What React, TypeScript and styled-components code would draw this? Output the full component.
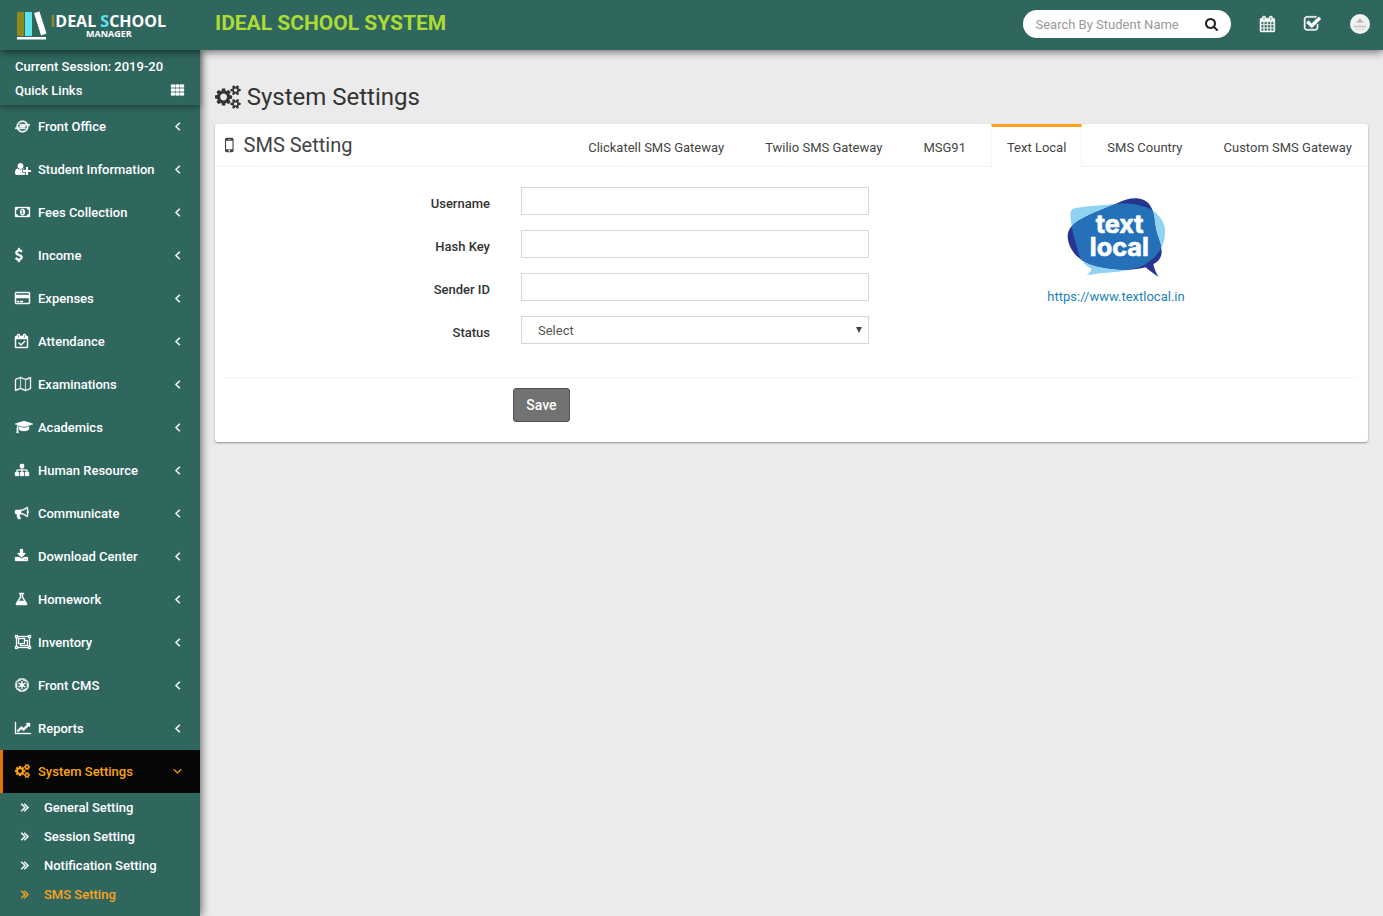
import React from "react";
import styled, { createGlobalStyle, css } from "styled-components";
import { FaEmpire, FaIoxhost } from "react-icons/fa";

const GlobalStyle = createGlobalStyle`
  *, *::before, *::after { box-sizing: border-box; }
  body {
    margin: 0;
    background: #ebebeb;
    color: #333;
    font-family: Roboto, "Liberation Sans", sans-serif;
    font-size: 14px;
    line-height: 20px;
  }
  a { text-decoration: none; color: inherit; }
  ul { list-style: none; margin: 0; padding: 0; }
  h1, h2 { margin: 0; font-weight: 400; }
  input, select, button { font-family: inherit; }
`;

/* ---------- icons ---------- */

type Glyph = { w: number; x?: number; d: string; evenOdd?: boolean };

const glyphs = {
  angleLeft: { w: 640, x: 576, d: "M1203 544q0 13-10 23l-393 393 393 393q10 10 10 23t-10 23l-50 50q-10 10-23 10t-23-10l-466-466q-10-10-10-23t10-23l466-466q10-10 23-10t23 10l50 50q10 10 10 23z" },
  angleDown: { w: 1152, x: 320, d: "M1395 736q0 13-10 23l-466 466q-10 10-23 10t-23-10l-466-466q-10-10-10-23t10-23l50-50q10-10 23-10t23 10l393 393 393-393q10-10 23-10t23 10l50 50q10 10 10 23z" },
  doubleRight: { w: 1024, x: 384, d: "M979 960q0 13-10 23l-466 466q-10 10-23 10t-23-10l-50-50q-10-10-10-23t10-23l393-393-393-393q-10-10-10-23t10-23l50-50q10-10 23-10t23 10l466 466q10 10 10 23zm384 0q0 13-10 23l-466 466q-10 10-23 10t-23-10l-50-50q-10-10-10-23t10-23l393-393-393-393q-10-10-10-23t10-23l50-50q10-10 23-10t23 10l466 466q10 10 10 23z" },
  checkSquare: { w: 1664, x: 64, d: "M1472 930v318q0 119-84.5 203.5t-203.5 84.5h-832q-119 0-203.5-84.5t-84.5-203.5v-832q0-119 84.5-203.5t203.5-84.5h832q63 0 117 25 15 7 18 23 3 17-9 29l-49 49q-10 10-23 10-3 0-9-2-23-6-45-6h-832q-66 0-113 47t-47 113v832q0 66 47 113t113 47h832q66 0 113-47t47-113v-254q0-13 9-22l64-64q10-10 23-10 6 0 12 3 20 8 20 29zm231-489l-814 814q-24 24-57 24t-57-24l-430-430q-24-24-24-57t24-57l110-110q24-24 57-24t57 24l263 263 647-647q24-24 57-24t57 24l110 110q24 24 24 57t-24 57z" },
  calendar: { w: 1664, x: 64, d: "M192 1664h288v-288h-288v288zm352 0h320v-288h-320v288zm-352-352h288v-320h-288v320zm352 0h320v-320h-320v320zm-352-384h288v-288h-288v288zm736 736h320v-288h-320v288zm-384-736h320v-288h-320v288zm768 736h288v-288h-288v288zm-384-352h320v-320h-320v320zm-352-864v-288q0-13-9.5-22.5t-22.5-9.5h-64q-13 0-22.5 9.5t-9.5 22.5v288q0 13 9.5 22.5t22.5 9.5h64q13 0 22.5-9.5t9.5-22.5zm736 864h288v-320h-288v320zm-384-384h320v-288h-320v288zm384 0h288v-288h-288v288zm32-480v-288q0-13-9.5-22.5t-22.5-9.5h-64q-13 0-22.5 9.5t-9.5 22.5v288q0 13 9.5 22.5t22.5 9.5h64q13 0 22.5-9.5t9.5-22.5zm384-64v1280q0 52-38 90t-90 38h-1408q-52 0-90-38t-38-90v-1280q0-52 38-90t90-38h128v-96q0-66 47-113t113-47h64q66 0 113 47t47 113v96h384v-96q0-66 47-113t113-47h64q66 0 113 47t47 113v96h128q52 0 90 38t38 90z" },
  search: { w: 1664, x: 64, d: "M1216 832q0-185-131.5-316.5t-316.5-131.5-316.5 131.5-131.5 316.5 131.5 316.5 316.5 131.5 316.5-131.5 131.5-316.5zm512 832q0 52-38 90t-90 38q-54 0-90-38l-343-342q-179 124-399 124-143 0-273.5-55.5t-225-150-150-225-55.5-273.5 55.5-273.5 150-225 225-150 273.5-55.5 273.5 55.5 225 150 150 225 55.5 273.5q0 220-124 399l343 343q37 37 37 90z" },
  download: { w: 1664, x: 64, d: "M1344 1344q0-26-19-45t-45-19-45 19-19 45 19 45 45 19 45-19 19-45zm256 0q0-26-19-45t-45-19-45 19-19 45 19 45 45 19 45-19 19-45zm128-224v320q0 40-28 68t-68 28h-1472q-40 0-68-28t-28-68v-320q0-40 28-68t68-28h465l135 136q58 56 136 56t136-56l136-136h464q40 0 68 28t28 68zm-325-569q17 41-14 70l-448 448q-18 19-45 19t-45-19l-448-448q-31-29-14-70 17-39 59-39h256v-448q0-26 19-45t45-19h256q26 0 45 19t19 45v448h256q42 0 59 39z" },
  lineChart: { w: 2048, d: "M2048 1536v128h-2048v-1536h128v1408h1920zm-128-1248v435q0 21-19.5 29.5t-35.5-7.5l-121-121-633 633q-10 10-23 10t-23-10l-233-233-416 416-192-192 585-585q10-10 23-10t23 10l233 233 464-464-121-121q-16-16-7.5-35.5t29.5-19.5h435q14 0 23 9t9 23z" },
  creditCard: { w: 1920, d: "M1760 128q66 0 113 47t47 113v1216q0 66-47 113t-113 47h-1600q-66 0-113-47t-47-113v-1216q0-66 47-113t113-47h1600zm-1600 128q-13 0-22.5 9.5t-9.5 22.5v224h1664v-224q0-13-9.5-22.5t-22.5-9.5h-1600zm1600 1280q13 0 22.5-9.5t9.5-22.5v-608h-1664v608q0 13 9.5 22.5t22.5 9.5h1600zm-1504-128v-128h256v128h-256zm384 0v-128h384v128h-384z" },
  map: { w: 2048, d: "M2020 11q28 20 28 53v1408q0 20-11 36t-29 23l-640 256q-24 11-48 0l-616-246-616 246q-10 5-24 5-19 0-36-11-28-20-28-53v-1408q0-20 11-36t29-23l640-256q24-11 48 0l616 246 616-246q32-13 60 6zm-1284 116v1270l576 230v-1270zm-608 217v1270l544-217v-1270zm1792 1104v-1270l-544 217v1270z", evenOdd: true },
  graduation: { w: 2304, d: "M1774 836l18 316q4 69-82 128t-235 93.5-323 34.5-323-34.5-235-93.5-82-128l18-316 574 181q22 7 48 7t48-7zm530-324q0 23-22 31l-1120 352q-4 1-10 1t-10-1l-652-206q-43 34-71 111.5t-34 178.5q63 36 63 109 0 69-58 107l58 433q2 14-8 25-9 11-24 11h-192q-15 0-24-11-10-11-8-25l58-433q-58-38-58-107 0-73 65-111 11-207 98-330l-333-104q-22-8-22-31t22-31l1120-352q4-1 10-1t10 1l1120 352q22 8 22 31z" },
  sitemap: { w: 1792, d: "M1792 1248v320q0 40-28 68t-68 28h-320q-40 0-68-28t-28-68v-320q0-40 28-68t68-28h96v-192h-512v192h96q40 0 68 28t28 68v320q0 40-28 68t-68 28h-320q-40 0-68-28t-28-68v-320q0-40 28-68t68-28h96v-192h-512v192h96q40 0 68 28t28 68v320q0 40-28 68t-68 28h-320q-40 0-68-28t-28-68v-320q0-40 28-68t68-28h96v-192q0-52 38-90t90-38h512v-192h-96q-40 0-68-28t-28-68v-320q0-40 28-68t68-28h320q40 0 68 28t28 68v320q0 40-28 68t-68 28h-96v192h512q52 0 90 38t38 90v192h96q40 0 68 28t28 68z" },
  bullhorn: { w: 1792, d: "M1664 640q53 0 90.5 37.5t37.5 90.5-37.5 90.5-90.5 37.5v384q0 52-38 90t-90 38q-417-347-812-380-58 19-91 66t-31 100.5 40 92.5q-20 33-23 65.5t6 58 33.5 55 48 50 61.5 50.5q-29 58-111.5 83t-168.5 11.5-132-55.5q-7-23-29.5-87.5t-32-94.5-23-89-15-101 3.5-98.5 22-110.5h-122q-66 0-113-47t-47-113v-192q0-66 47-113t113-47h480q435 0 896-384 52 0 90 38t38 90v384zm-128 604v-954q-394 302-768 343v270q377 42 768 341z" },
  flask: { w: 1664, x: 64, d: "M1591 1448q56 89 21.5 152.5t-140.5 63.5h-1152q-106 0-140.5-63.5t21.5-152.5l503-793v-399h-64q-26 0-45-19t-19-45 19-45 45-19h512q26 0 45 19t19 45-19 45-45 19h-64v399zm-779-725l-272 429h712l-272-429-20-31v-436h-128v436z" },
  mobile: { w: 768, x: 512, d: "M976 1408q0-33-23.5-56.5t-56.5-23.5-56.5 23.5-23.5 56.5 23.5 56.5 56.5 23.5 56.5-23.5 23.5-56.5zm208-160v-704q0-13-9.5-22.5t-22.5-9.5h-512q-13 0-22.5 9.5t-9.5 22.5v704q0 13 9.5 22.5t22.5 9.5h512q13 0 22.5-9.5t9.5-22.5zm-192-848q0-16-16-16h-160q-16 0-16 16t16 16h160q16 0 16-16zm288-16v1024q0 52-38 90t-90 38h-512q-52 0-90-38t-38-90v-1024q0-52 38-90t90-38h512q52 0 90 38t38 90z" },
  dollar: { w: 1024, x: 400, d: "M1362 1185q0 153-99.5 263.5t-258.5 136.5v175q0 14-9 23t-23 9h-135q-13 0-22.5-9.5t-9.5-22.5v-175q-66-9-127.5-31t-101.5-44.5-74-48-46.5-37.5-17.5-18q-17-21-2-41l103-135q7-10 23-12 15-2 24 9l2 2q113 99 243 125 37 8 74 8 81 0 142.5-43t61.5-122q0-28-15-53t-33.5-42-58.5-37.5-66-32-80-32.5q-39-16-61.5-25t-61.5-26.5-62.5-31-56.5-35.5-53.5-42.5-43.5-49-35.5-58-21-66.5-8.5-78q0-138 98-242t255-134v-180q0-13 9.5-22.5t22.5-9.5h135q14 0 23 9t9 23v176q57 6 110.5 23t87 33.5 63.5 37.5 39 29 15 14q17 18 5 38l-81 146q-8 15-23 16-14 3-27-7-3-3-14.5-12t-39-26.5-58.5-32-74.5-26-85.5-11.5q-95 0-155 43t-60 111q0 26 8.5 48t29.5 41.5 39.5 33 56 31 60.5 27 70 27.5q53 20 81 31.5t76 35 75.5 42.5 62 50 53 63.5 31.5 76.5 13 94z" },
  money: { w: 1920, d: "M768 1152h384v-96h-128v-448h-114l-148 137 77 80q42-37 55-57h2v288h-128v96zm512-256q0 70-21 142t-59.5 134-101.5 101-138 39-138-39-101.5-101-59.5-134-21-142 21-142 59.5-134 101.5-101 138-39 138 39 101.5 101 59.5 134 21 142zm512 256v-512q-106 0-181-75t-75-181h-1152q0 106-75 181t-181 75v512q106 0 181 75t75 181h1152q0-106 75-181t181-75zm128-832v1152q0 26-19 45t-45 19h-1792q-26 0-45-19t-19-45v-1152q0-26 19-45t45-19h1792q26 0 45 19t19 45z", evenOdd: true },
  userPlus: { w: 2048, d: "M704 896q-159 0-271.5-112.5t-112.5-271.5 112.5-271.5 271.5-112.5 271.5 112.5 112.5 271.5-112.5 271.5-271.5 112.5zm960 128h352q13 0 22.5 9.5t9.5 22.5v192q0 13-9.5 22.5t-22.5 9.5h-352v352q0 13-9.5 22.5t-22.5 9.5h-192q-13 0-22.5-9.5t-9.5-22.5v-352h-352q-13 0-22.5-9.5t-9.5-22.5v-192q0-13 9.5-22.5t22.5-9.5h352v-352q0-13 9.5-22.5t22.5-9.5h192q13 0 22.5 9.5t9.5 22.5v352zm-736 224q0 52 38 90t90 38h256v238q-68 50-171 50h-874q-121 0-194-69t-73-190q0-53 3.5-103.5t14-109 26.5-108.5 43-97.5 62-81 85.5-53.5 111.5-20q19 0 39 17 79 61 154.5 91.5t164.5 30.5 164.5-30.5 154.5-91.5q20-17 39-17 132 0 217 96h-223q-52 0-90 38t-38 90v192z" },
  calendarCheck: { w: 1664, d: "M1303 964l-512 512q-10 9-23 9t-23-9l-288-288q-9-10-9-23t9-22l46-46q9-9 22-9t23 9l220 220 444-444q10-9 23-9t22 9l46 46q9 9 9 22t-9 23zm-1175 700h1408v-1024h-1408v1024zm384-1216v-288q0-14-9-23t-23-9h-64q-14 0-23 9t-9 23v288q0 14 9 23t23 9h64q14 0 23-9t9-23zm768 0v-288q0-14-9-23t-23-9h-64q-14 0-23 9t-9 23v288q0 14 9 23t23 9h64q14 0 23-9t9-23zm384-64v1280q0 52-38 90t-90 38h-1408q-52 0-90-38t-38-90v-1280q0-52 38-90t90-38h128v-96q0-66 47-113t113-47h64q66 0 113 47t47 113v96h384v-96q0-66 47-113t113-47h64q66 0 113 47t47 113v96h128q52 0 90 38t38 90z", evenOdd: true },
  objectGroup: { w: 2048, d: "M2048 384h-128v1024h128v384h-384v-128h-1280v128h-384v-384h128v-1024h-128v-384h384v128h1280v-128h384zM128 128v128h128v-128zM1792 128v128h128v-128zM128 1536v128h128v-128zM1792 1536v128h128v-128zM384 256v128h-128v1024h128v128h1280v-128h128v-1024h-128v-128zM384 384h896v256h384v768h-1024v-256h-256zM512 512v512h640v-512zM1280 768v384h-512v128h768v-512z", evenOdd: true },
  gears: { w: 1920, d: "M896 896q0-106-75-181t-181-75-181 75-75 181 75 181 181 75 181-75 75-181zm768 512q0-52-38-90t-90-38-90 38-38 90q0 53 37.5 90.5t90.5 37.5 90.5-37.5 37.5-90.5zm0-1024q0-52-38-90t-90-38-90 38-38 90q0 53 37.5 90.5t90.5 37.5 90.5-37.5 37.5-90.5zm-384 421v185q0 10-7 19.5t-16 10.5l-155 24q-11 35-32 76 34 48 90 115 7 11 7 20 0 12-7 19-23 30-82.5 89.5t-78.5 59.5q-11 0-21-7l-115-90q-37 19-77 31-11 108-23 155-7 24-30 24h-186q-11 0-20-7.5t-10-17.5l-23-153q-34-10-75-31l-118 89q-7 7-20 7-11 0-21-8-144-133-144-160 0-9 7-19 10-14 41-53t47-61q-23-44-35-82l-152-24q-10-1-17-9.5t-7-19.5v-185q0-10 7-19.5t16-10.5l155-24q11-35 32-76-34-48-90-115-7-11-7-20 0-12 7-20 22-30 82-89t79-59q11 0 21 7l115 90q34-18 77-32 11-108 23-154 7-24 30-24h186q11 0 20 7.5t10 17.5l23 153q34 10 75 31l118-89q8-7 20-7 11 0 21 8 144 133 144 160 0 8-7 19-12 16-42 54t-45 60q23 48 34 82l152 23q10 2 17 10.5t7 19.5zm640 533v140q0 16-149 31-12 27-30 52 51 113 51 138 0 4-4 7-122 71-124 71-8 0-46-47t-52-68q-20 2-30 2t-30-2q-14 21-52 68t-46 47q-2 0-124-71-4-3-4-7 0-25 51-138-18-25-30-52-149-15-149-31v-140q0-16 149-31 13-29 30-52-51-113-51-138 0-4 4-7 4-2 35-20t59-34 30-16q8 0 46 46.5t52 67.5q20-2 30-2t30 2q51-71 92-112l6-2q4 0 124 70 4 3 4 7 0 25-51 138 17 23 30 52 149 15 149 31zm0-1024v140q0 16-149 31-12 27-30 52 51 113 51 138 0 4-4 7-122 71-124 71-8 0-46-47t-52-68q-20 2-30 2t-30-2q-14 21-52 68t-46 47q-2 0-124-71-4-3-4-7 0-25 51-138-18-25-30-52-149-15-149-31v-140q0-16 149-31 13-29 30-52-51-113-51-138 0-4 4-7 4-2 35-20t59-34 30-16q8 0 46 46.5t52 67.5q20-2 30-2t30 2q51-71 92-112l6-2q4 0 124 70 4 3 4 7 0 25-51 138 17 23 30 52 149 15 149 31z" },
  grid: { w: 1664, d: "M96 192h320q96 0 96 96v192q0 96-96 96h-320q-96 0-96-96v-192q0-96 96-96zM672 192h320q96 0 96 96v192q0 96-96 96h-320q-96 0-96-96v-192q0-96 96-96zM1248 192h320q96 0 96 96v192q0 96-96 96h-320q-96 0-96-96v-192q0-96 96-96zM96 704h320q96 0 96 96v192q0 96-96 96h-320q-96 0-96-96v-192q0-96 96-96zM672 704h320q96 0 96 96v192q0 96-96 96h-320q-96 0-96-96v-192q0-96 96-96zM1248 704h320q96 0 96 96v192q0 96-96 96h-320q-96 0-96-96v-192q0-96 96-96zM96 1216h320q96 0 96 96v192q0 96-96 96h-320q-96 0-96-96v-192q0-96 96-96zM672 1216h320q96 0 96 96v192q0 96-96 96h-320q-96 0-96-96v-192q0-96 96-96zM1248 1216h320q96 0 96 96v192q0 96-96 96h-320q-96 0-96-96v-192q0-96 96-96z" },
} satisfies Record<string, Glyph>;

type GlyphName = keyof typeof glyphs;

const Svg = styled.svg`
  display: block;
  flex: none;
  fill: currentColor;
  overflow: visible;
`;

function Icon({ name, size = 14, weight = 0 }: { name: GlyphName; size?: number; weight?: number }) {
  const g: Glyph = glyphs[name];
  return (
    <Svg
      viewBox={`${g.x ?? 0} 0 ${g.w} 1792`}
      width={(g.w / 1792) * size}
      height={size}
      aria-hidden="true"
    >
      <path
        d={g.d}
        fillRule={g.evenOdd ? "evenodd" : "nonzero"}
        stroke={weight ? "currentColor" : "none"}
        strokeWidth={weight}
      />
    </Svg>
  );
}

/* ---------- top bar ---------- */

const TopBar = styled.header`
  position: relative;
  z-index: 2;
  display: flex;
  align-items: center;
  height: 50px;
  padding-right: 13px;
  background: #2f675f;
  color: #fff;
  box-shadow: 0 2px 8px rgba(0, 0, 0, 0.55);
`;

const Brand = styled.a`
  display: block;
  flex: none;
  width: 215px;
  padding-left: 16px;
`;

const SiteName = styled.span`
  flex: 1;
  padding-bottom: 4px;
  color: #addb33;
  font-size: 21px;
  font-weight: 700;
  line-height: 24px;
  white-space: nowrap;
`;

const SearchBox = styled.form`
  display: flex;
  align-items: center;
  width: 208px;
  height: 28px;
  margin-bottom: 2px;
  padding: 0 13px 0 12px;
  border-radius: 14px;
  background: #fff;
`;

const SearchInput = styled.input`
  flex: none;
  width: 147px;
  padding: 0;
  border: 0;
  outline: 0;
  background: none;
  color: #444;
  font-size: 13px;
  &::placeholder { color: #999; }
`;

const IconButton = styled.button`
  display: flex;
  padding: 0;
  border: 0;
  background: none;
  color: inherit;
  cursor: pointer;
`;

const SearchButton = styled(IconButton)`
  margin-left: auto;
  color: #222;
`;

const TopActions = styled.nav`
  display: flex;
  align-items: center;
  gap: 29px;
  margin-left: 29px;
  padding-bottom: 2px;
`;

function BrandLogo() {
  return (
    <Svg width="152" height="32" viewBox="0 0 152 32" role="img" aria-label="Ideal School Manager">
      <rect x="1" y="3" width="7" height="24" fill="#8f8a1e" />
      <rect x="9" y="3" width="7" height="24" fill="#5fe3ea" />
      <path d="M18 4l5.500-1.500 7 22-5.500 2z" fill="#fff" />
      <path d="M1 28h29v2.500H1z" fill="#fff" />
      <g fontFamily="'Open Sans', 'Noto Sans', sans-serif" fontWeight="700" fill="#fff">
        <text x="34" y="18" fontSize="16">
          <tspan fill="#8f8a1e">I</tspan>DEAL <tspan fill="#5fe3ea">S</tspan>CHOOL
        </text>
        <text x="70" y="28" fontSize="9">MANAGER</text>
      </g>
    </Svg>
  );
}

function Avatar() {
  return (
    <Svg width="20" height="20" viewBox="0 0 20 20" aria-hidden="true">
      <circle cx="10" cy="10" r="10" fill="#f1f1f1" />
      <path d="M6.500 8.500c0-1 1.500-1 1.500-2 .5 0 1-1.500 2-1.500s1.500 1.500 2 1.500c0 1 1.500 1 1.500 2z" fill="#b4b4b4" />
      <path d="M4 12.500h12" stroke="#bdbdbd" strokeWidth="2" strokeDasharray="2 .6" />
      <path d="M6 15.500h8" stroke="#d2d2d2" />
    </Svg>
  );
}

/* ---------- side bar ---------- */

const Columns = styled.div`
  display: flex;
  min-height: calc(100vh - 50px);
`;

const SideBar = styled.aside`
  position: relative;
  z-index: 1;
  flex: none;
  width: 200px;
  background: #2f675f;
  color: #fff;
  font-size: 13px;
  font-weight: 500;
  box-shadow: 2px 0 8px rgba(0, 0, 0, 0.5);
`;

const SessionBox = styled.div`
  padding: 5px 16px 2px 15px;
  line-height: 24px;
  box-shadow: 0 2px 6px rgba(0, 0, 0, 0.4);
`;

const QuickLinks = styled.div`
  display: flex;
  align-items: center;
  justify-content: space-between;
  ${IconButton} { padding-bottom: 3px; }
`;

const MenuLink = styled.a<{ $active?: boolean }>`
  display: flex;
  align-items: center;
  height: 43px;
  padding: 0 18px 0 15px;
  ${(p) =>
    p.$active &&
    css`
      padding-left: 12px;
      border-left: 3px solid #e0740a;
      background: #070707;
      color: #faa21c;
    `}
`;

const MenuIcon = styled.span`
  display: flex;
  width: 23px;
  padding-bottom: 1px;
`;

const MenuArrow = styled.span`
  display: flex;
  justify-content: center;
  width: 9px;
  margin-left: auto;
  padding-bottom: 1px;
`;

const SubLink = styled.a<{ $active?: boolean }>`
  display: flex;
  align-items: center;
  height: 29px;
  padding-left: 21px;
  color: ${(p) => (p.$active ? "#faa21c" : "#fff")};
`;

const menu: { label: string; icon: React.ReactNode }[] = [
  { label: "Front Office", icon: <FaIoxhost size={15} stroke="currentColor" strokeWidth={24} /> },
  { label: "Student Information", icon: <Icon name="userPlus" /> },
  { label: "Fees Collection", icon: <Icon name="money" weight={40} /> },
  { label: "Income", icon: <Icon name="dollar" weight={60} /> },
  { label: "Expenses", icon: <Icon name="creditCard" weight={60} /> },
  { label: "Attendance", icon: <Icon name="calendarCheck" weight={60} /> },
  { label: "Examinations", icon: <Icon name="map" weight={40} /> },
  { label: "Academics", icon: <Icon name="graduation" weight={40} /> },
  { label: "Human Resource", icon: <Icon name="sitemap" weight={40} /> },
  { label: "Communicate", icon: <Icon name="bullhorn" weight={60} /> },
  { label: "Download Center", icon: <Icon name="download" weight={30} /> },
  { label: "Homework", icon: <Icon name="flask" weight={60} /> },
  { label: "Inventory", icon: <Icon name="objectGroup" weight={40} /> },
  { label: "Front CMS", icon: <FaEmpire size={14} stroke="currentColor" strokeWidth={12} /> },
  { label: "Reports", icon: <Icon name="lineChart" weight={40} /> },
];

const subMenu = ["General Setting", "Session Setting", "Notification Setting", "SMS Setting"];

/* ---------- content ---------- */

const Main = styled.main`
  flex: 1;
  min-width: 0;
  padding: 32px 15px 15px;
`;

const PageTitle = styled.h1`
  display: flex;
  align-items: center;
  gap: 6px;
  margin-bottom: 12px;
  font-size: 24px;
  line-height: 30px;
`;

const Card = styled.section`
  border-radius: 3px;
  background: #fff;
  box-shadow: 0 1px 2px rgba(0, 0, 0, 0.4);
`;

const CardHeader = styled.div`
  display: flex;
  justify-content: space-between;
  height: 43px;
  border-bottom: 1px solid #f4f4f4;
`;

const CardTitle = styled.h2`
  display: flex;
  align-items: center;
  gap: 10px;
  padding-left: 10px;
  color: #444;
  font-size: 20px;
  line-height: 42px;
`;

const Tabs = styled.ul`
  display: flex;
  gap: 9px;
`;

const Tab = styled.a<{ $active?: boolean }>`
  display: block;
  height: 43px;
  padding: 11px 15px 0;
  border: solid transparent;
  border-width: 3px 1px 0;
  color: #444;
  font-size: 13px;
  white-space: nowrap;
  ${(p) =>
    p.$active &&
    css`
      border-color: #faa21c #f4f4f4;
      background: #fff;
    `}
`;

const CardBody = styled.div`
  display: grid;
  grid-template-columns: 649fr 484fr;
  margin: 0 10px;
  padding: 20px 0 33px;
  border-bottom: 1px solid #f4f4f4;
`;

const Fields = styled.div`
  display: grid;
  gap: 15px;
  padding-right: 5px;
`;

const Field = styled.div`
  display: grid;
  grid-template-columns: 296fr 348fr;
  height: 28px;
`;

const Label = styled.label`
  padding: 8px 31px 0 0;
  font-size: 13px;
  font-weight: 500;
  line-height: 18px;
  text-align: right;
`;

const control = css`
  width: 100%;
  height: 28px;
  border: 1px solid #d2d6de;
  border-radius: 0;
  background: #fff;
  color: #555;
  font-size: 13px;
`;

const TextInput = styled.input`
  ${control}
  padding: 0 12px;
`;

const SelectWrap = styled.div`
  position: relative;
  svg {
    position: absolute;
    top: 11px;
    right: 7px;
    pointer-events: none;
  }
`;

const Select = styled.select`
  ${control}
  padding: 0 16px;
  appearance: none;
`;

const Provider = styled.aside`
  display: flex;
  flex-direction: column;
  align-items: center;
  gap: 10px;
  padding-top: 10px;
  color: #1c84ba;
  font-size: 13px;
`;

const CardFooter = styled.div`
  margin-left: 25%;
  padding: 10px 10px 20px;
`;

const SaveButton = styled.button`
  height: 34px;
  padding: 0 12px;
  border: 1px solid #505050;
  border-radius: 3px;
  background: #727272;
  color: #fff;
  font-size: 14px;
  font-weight: 500;
  cursor: pointer;
`;

const lightBubble =
  "M166 84C205 77 260 76 305 70C350 70 385 84 398 92C425 112 436 135 434 160C433 205 400 245 355 262C315 275 265 279 236 280C222 283 210 285 199 285C208 279 214 272 213 266C190 254 178 235 174 215C164 180 152 145 150 105C150 92 156 86 166 84Z";
const darkBubble =
  "M142 172C141 148 155 135 178 120C215 100 260 83 290 70C315 57 335 53 350 55C375 57 388 70 394 85C403 105 402 130 407 150C412 175 423 190 424 215C424 235 412 246 399 252C401 266 408 279 414 290C399 280 385 271 376 262C340 273 285 270 245 262C205 255 180 240 163 222C150 205 143 190 142 172Z";

function TextLocalLogo() {
  return (
    <Svg width="99" height="80" viewBox="140 51 297 240" role="img" aria-label="text local">
      <defs>
        <clipPath id="bubble">
          <path d={lightBubble} />
        </clipPath>
      </defs>
      <path d={lightBubble} fill="#8fd2f1" />
      <path d={darkBubble} fill="#27358f" />
      <path d={darkBubble} fill="#2571b9" clipPath="url(#bubble)" />
      <g
        fontFamily="Inter, 'Noto Sans', sans-serif"
        fontWeight="700"
        fontSize="76"
        textAnchor="middle"
        fill="#fff"
        stroke="#fff"
        strokeWidth="2"
        strokeLinejoin="round"
      >
        <text x="298" y="158">text</text>
        <text x="297" y="229">local</text>
      </g>
    </Svg>
  );
}

const tabs = ["Clickatell SMS Gateway", "Twilio SMS Gateway", "MSG91", "Text Local", "SMS Country", "Custom SMS Gateway"];

const textFields = [
  { id: "username", label: "Username" },
  { id: "hash-key", label: "Hash Key" },
  { id: "sender-id", label: "Sender ID" },
];

export default function App() {
  return (
    <>
      <GlobalStyle />
      <TopBar>
        <Brand href="#">
          <BrandLogo />
        </Brand>
        <SiteName>IDEAL SCHOOL SYSTEM</SiteName>
        <SearchBox onSubmit={(e) => e.preventDefault()}>
          <SearchInput type="text" aria-label="Search students" placeholder="Search By Student Name" />
          <SearchButton type="submit" aria-label="Search">
            <Icon name="search" />
          </SearchButton>
        </SearchBox>
        <TopActions>
          <IconButton type="button" aria-label="Calendar">
            <Icon name="calendar" size={16} weight={50} />
          </IconButton>
          <IconButton type="button" aria-label="Tasks">
            <Icon name="checkSquare" size={18} weight={40} />
          </IconButton>
          <IconButton type="button" aria-label="Account">
            <Avatar />
          </IconButton>
        </TopActions>
      </TopBar>
      <Columns>
        <SideBar>
          <SessionBox>
            <div>Current Session: 2019-20</div>
            <QuickLinks>
              Quick Links
              <IconButton type="button" aria-label="Open quick links">
                <Icon name="grid" weight={40} />
              </IconButton>
            </QuickLinks>
          </SessionBox>
          <nav>
            <ul>
              {menu.map((item) => (
                <li key={item.label}>
                  <MenuLink href="#">
                    <MenuIcon>{item.icon}</MenuIcon>
                    {item.label}
                    <MenuArrow>
                      <Icon name="angleLeft" weight={80} />
                    </MenuArrow>
                  </MenuLink>
                </li>
              ))}
              <li>
                <MenuLink href="#" $active>
                  <MenuIcon>
                    <Icon name="gears" weight={40} />
                  </MenuIcon>
                  System Settings
                  <MenuArrow>
                    <Icon name="angleDown" weight={40} />
                  </MenuArrow>
                </MenuLink>
                <ul>
                  {subMenu.map((label) => (
                    <li key={label}>
                      <SubLink href="#" $active={label === "SMS Setting"}>
                        <MenuIcon>
                          <Icon name="doubleRight" weight={70} />
                        </MenuIcon>
                        {label}
                      </SubLink>
                    </li>
                  ))}
                </ul>
              </li>
            </ul>
          </nav>
        </SideBar>
        <Main>
          <PageTitle>
            <Icon name="gears" size={24} />
            System Settings
          </PageTitle>
          <Card>
            <CardHeader>
              <CardTitle>
                <Icon name="mobile" size={20} />
                SMS Setting
              </CardTitle>
              <Tabs>
                {tabs.map((label) => (
                  <li key={label}>
                    <Tab href="#" $active={label === "Text Local"}>
                      {label}
                    </Tab>
                  </li>
                ))}
              </Tabs>
            </CardHeader>
            <form onSubmit={(e) => e.preventDefault()}>
              <CardBody>
                <Fields>
                  {textFields.map((f) => (
                    <Field key={f.id}>
                      <Label htmlFor={f.id}>{f.label}</Label>
                      <TextInput id={f.id} type="text" />
                    </Field>
                  ))}
                  <Field>
                    <Label htmlFor="status">Status</Label>
                    <SelectWrap>
                      <Select id="status" defaultValue="">
                        <option value="">Select</option>
                        <option value="enabled">Enabled</option>
                        <option value="disabled">Disabled</option>
                      </Select>
                      <Svg width="6" height="6" viewBox="0 0 6 6" aria-hidden="true">
                        <path d="M0 0h6L3 6z" fill="#444" />
                      </Svg>
                    </SelectWrap>
                  </Field>
                </Fields>
                <Provider>
                  <TextLocalLogo />
                  <a href="#">https://www.textlocal.in</a>
                </Provider>
              </CardBody>
              <CardFooter>
                <SaveButton type="submit">Save</SaveButton>
              </CardFooter>
            </form>
          </Card>
        </Main>
      </Columns>
    </>
  );
}
